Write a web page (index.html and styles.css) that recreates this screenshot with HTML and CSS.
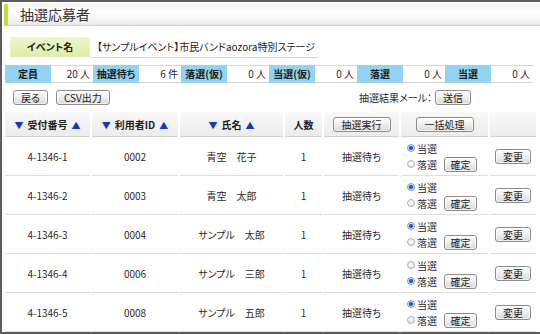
FILE: index.html
```html
<!DOCTYPE html>
<html lang="ja">
<head>
<meta charset="utf-8">
<title>抽選応募者</title>
<link rel="stylesheet" href="styles.css">
</head>
<body>
<div class="frame">
  <div class="titlebar"><h1 class="title">抽選応募者</h1></div>

  <div class="event">
    <div class="event-label">イベント名</div>
    <div class="event-value">【サンプルイベント】市民バンドaozora特別ステージ</div>
  </div>

  <div class="stats">
    <div class="st-label">定員</div><div class="st-val">20 人</div>
    <div class="st-label">抽選待ち</div><div class="st-val">6 件</div>
    <div class="st-label">落選(仮)</div><div class="st-val">0 人</div>
    <div class="st-label">当選(仮)</div><div class="st-val">0 人</div>
    <div class="st-label">落選</div><div class="st-val">0 人</div>
    <div class="st-label">当選</div><div class="st-val">0 人</div>
  </div>

  <div class="actions">
    <div class="actions-left">
      <button class="btn">戻る</button>
      <button class="btn">CSV出力</button>
    </div>
    <div class="mail">抽選結果メール：<button class="btn">送信</button></div>
  </div>

  <table class="list">
    <colgroup>
      <col class="c1"><col class="c2"><col class="c3"><col class="c4"><col class="c5"><col class="c6"><col class="c7">
    </colgroup>
    <thead>
      <tr>
        <th><span class="tri">▼</span>受付番号<span class="tri">▲</span></th>
        <th><span class="tri">▼</span>利用者ID<span class="tri">▲</span></th>
        <th><span class="tri">▼</span>氏名<span class="tri">▲</span></th>
        <th>人数</th>
        <th><button class="btn btn-wide">抽選実行</button></th>
        <th><button class="btn btn-wide">一括処理</button></th>
        <th></th>
      </tr>
    </thead>
    <tbody>
      <tr>
        <td>4-1346-1</td><td>0002</td><td>青空　花子</td><td>1</td><td>抽選待ち</td>
        <td class="pick">
          <div class="rl"><span class="radio on"></span>当選</div>
          <div class="rl"><span class="radio"></span>落選<button class="btn btn-ok">確定</button></div>
        </td>
        <td><button class="btn">変更</button></td>
      </tr>
      <tr>
        <td>4-1346-2</td><td>0003</td><td>青空　太郎</td><td>1</td><td>抽選待ち</td>
        <td class="pick">
          <div class="rl"><span class="radio on"></span>当選</div>
          <div class="rl"><span class="radio"></span>落選<button class="btn btn-ok">確定</button></div>
        </td>
        <td><button class="btn">変更</button></td>
      </tr>
      <tr>
        <td>4-1346-3</td><td>0004</td><td>サンプル　太郎</td><td>1</td><td>抽選待ち</td>
        <td class="pick">
          <div class="rl"><span class="radio on"></span>当選</div>
          <div class="rl"><span class="radio"></span>落選<button class="btn btn-ok">確定</button></div>
        </td>
        <td><button class="btn">変更</button></td>
      </tr>
      <tr>
        <td>4-1346-4</td><td>0006</td><td>サンプル　三郎</td><td>1</td><td>抽選待ち</td>
        <td class="pick">
          <div class="rl"><span class="radio"></span>当選</div>
          <div class="rl"><span class="radio on"></span>落選<button class="btn btn-ok">確定</button></div>
        </td>
        <td><button class="btn">変更</button></td>
      </tr>
      <tr>
        <td>4-1346-5</td><td>0008</td><td>サンプル　五郎</td><td>1</td><td>抽選待ち</td>
        <td class="pick">
          <div class="rl"><span class="radio on"></span>当選</div>
          <div class="rl"><span class="radio"></span>落選<button class="btn btn-ok">確定</button></div>
        </td>
        <td><button class="btn">変更</button></td>
      </tr>
    </tbody>
  </table>
</div>
</body>
</html>
```

FILE: styles.css
```css
* { box-sizing: border-box; }

body {
  margin: 0;
  font-family: "Noto Sans CJK JP", "Noto Sans", sans-serif;
  font-size: 10px;
  color: #2a2a2a;
  font-feature-settings: "palt";
  background: #fff;
}

.frame {
  width: 540px;
  height: 334px;
  border: 2px solid #5c5c5c;
  border-right: none;
  overflow: hidden;
  background: #fff;
}

.titlebar {
  margin: 2px 0 0 2px;
  height: 22px;
  border-left: 4px solid #c4dc3a;
  border-bottom: 1px solid #d2d2d2;
  background: linear-gradient(#f3f3f3, #ffffff 35%, #f6f6f6 70%, #e8e8e8);
  padding-left: 12px;
}

.title {
  margin: 0;
  font-size: 14px;
  font-weight: normal;
  line-height: 21px;
  color: #333;
  font-feature-settings: normal;
}

.event {
  display: flex;
  margin: 11px 0 0 8px;
  height: 21px;
}

.event-label {
  width: 80px;
  height: 20px;
  line-height: 20px;
  text-align: center;
  font-weight: bold;
  background: linear-gradient(#eef6cf, #dcecA6);
  color: #222;
}

.event-value {
  width: 228px;
  height: 21px;
  line-height: 20px;
  padding-left: 7px;
  border-bottom: 1px solid #d6d6d6;
  color: #222;
}

.stats {
  display: grid;
  grid-template-columns: repeat(6, 46px 42px);
  margin: 7px 0 0 3px;
  height: 18px;
}

.st-label {
  background: #93d2f2;
  font-weight: bold;
  text-align: center;
  line-height: 18px;
  color: #1a1a1a;
  white-space: nowrap;
}

.st-val {
  text-align: right;
  padding-right: 3px;
  line-height: 16px;
  border: 1px solid #d8d8d8;
  border-left: none;
  border-right: none;
  background: #fff;
}

.actions {
  display: flex;
  justify-content: space-between;
  align-items: center;
  margin-top: 7px;
  height: 15px;
  padding: 0 69px 0 11px;
}

.actions-left {
  display: flex;
  gap: 8px;
}

.mail {
  display: flex;
  align-items: center;
  gap: 3px;
}

.btn {
  font-family: inherit;
  font-feature-settings: "palt";
  font-size: 10px;
  color: #222;
  height: 15px;
  line-height: 13px;
  padding: 0 7px;
  margin: 0;
  border: 1px solid #8c8c8c;
  border-radius: 3px;
  background: linear-gradient(#ffffff, #f0f0f0 45%, #d9d9d9);
  box-shadow: inset 0 0 0 1px rgba(255,255,255,0.6);
}

.btn-wide {
  width: 58px;
  padding: 0;
}

.btn-ok {
  width: 33px;
  padding: 0;
  margin-left: 7px;
}

.list {
  margin: 7px 0 0 1px;
  width: 535px;
  table-layout: fixed;
  border-collapse: separate;
  border-spacing: 2px 0;
}

.c1 { width: 85px; }
.c2 { width: 86px; }
.c3 { width: 103px; }
.c4 { width: 37px; }
.c5 { width: 75px; }
.c6 { width: 87px; }
.c7 { width: 46px; }

.list th {
  height: 25px;
  padding: 0;
  font-weight: bold;
  font-size: 10px;
  text-align: center;
  white-space: nowrap;
  background: linear-gradient(#f8f8f8, #ececec);
  border-bottom: 1px solid #d2d2d2;
  color: #1e1e1e;
}

.tri {
  color: #1236c8;
  font-size: 9px;
  margin: 0 4px;
}

.list td {
  height: 39px;
  padding: 0;
  text-align: center;
  vertical-align: middle;
  white-space: nowrap;
  border-bottom: 1px solid #dedede;
}

.list td.pick {
  text-align: left;
  padding-left: 6px;
}

.rl {
  display: flex;
  align-items: center;
  height: 16px;
}

.radio {
  display: inline-block;
  width: 8px;
  height: 8px;
  border-radius: 50%;
  border: 1px solid #a8b0b8;
  background: radial-gradient(circle at 50% 40%, #ffffff, #dadde0);
  margin-right: 2px;
}

.radio.on {
  border-color: #7f98b8;
  background: radial-gradient(circle, #1f5ed8 0, #1f5ed8 1.6px, #cfe0f6 2.4px, #e8eef6 4px);
}
```
